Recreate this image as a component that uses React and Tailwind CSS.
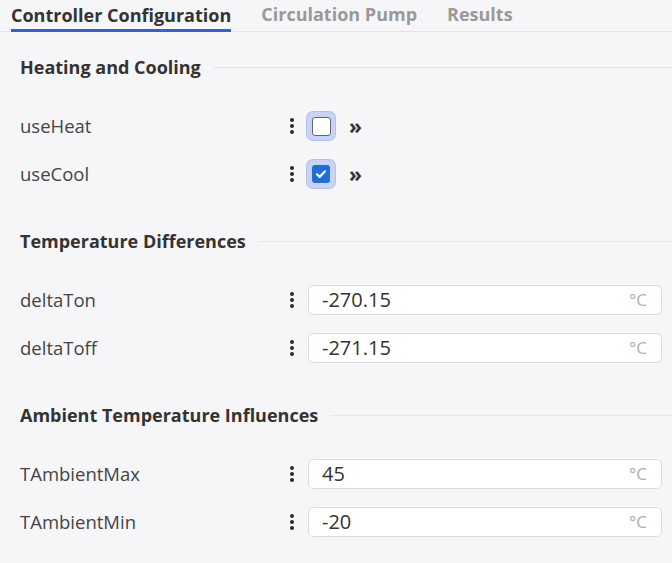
import React from "react";

const font = { fontFamily: "'Open Sans', 'Noto Sans', sans-serif" };

function Kebab() {
  return (
    <div className="flex w-[10px] flex-col items-center gap-[2px]">
      <span className="h-[4px] w-[4px] rounded-full bg-[#2a2a2a]" />
      <span className="h-[4px] w-[4px] rounded-full bg-[#2a2a2a]" />
      <span className="h-[4px] w-[4px] rounded-full bg-[#2a2a2a]" />
    </div>
  );
}

function Section({ title, first, children }) {
  return (
    <div className={first ? "mt-[23px]" : "mt-[40px]"}>
      <div className="flex h-[24px] items-center gap-[12px] pl-[20px]">
        <h3 className="text-[18px] font-bold leading-[24px] text-[#333] whitespace-nowrap">{title}</h3>
        <div className="h-px flex-1 bg-[#e6e7ea]" />
      </div>
      <div className="mt-[32px] flex flex-col gap-[18px]">{children}</div>
    </div>
  );
}

function CheckRow({ label, checked }) {
  return (
    <div className="flex h-[30px] items-center">
      <div className="w-[287px] pl-[20px] text-[18.5px] text-[#444]">{label}</div>
      <Kebab />
      <div className="ml-[10px] flex h-[28px] w-[28px] items-center justify-center rounded-[6px] bg-[#c9d3f3] ring-1 ring-[#b3c0ec]">
        {checked ? (
          <div className="flex h-[18px] w-[18px] items-center justify-center rounded-[3px] bg-[#1d6fd8]">
            <svg width="12" height="12" viewBox="0 0 12 12" fill="none">
              <path d="M2 6.3l2.6 2.6L10 3.3" stroke="#fff" strokeWidth="2.2" strokeLinecap="round" strokeLinejoin="round" />
            </svg>
          </div>
        ) : (
          <div className="h-[19px] w-[19px] rounded-[3px] border-[1.5px] border-[#666] bg-white" />
        )}
      </div>
      <span className="ml-[14px] text-[21px] font-bold leading-none text-[#333]">»</span>
    </div>
  );
}

function InputRow({ label, value }) {
  return (
    <div className="flex h-[30px] items-center">
      <div className="w-[287px] pl-[20px] text-[18.5px] text-[#444]">{label}</div>
      <Kebab />
      <div className="ml-[11px] mr-[10px] flex h-[30px] flex-1 items-center justify-between rounded-[5px] border border-[#dcdcdc] bg-white pl-[13px] pr-[14px]">
        <span className="text-[20px] text-[#333]">{value}</span>
        <span className="text-[17px] text-[#b0b0b0]">°C</span>
      </div>
    </div>
  );
}

export default function App() {
  return (
    <div className="min-h-[563px] w-full overflow-hidden bg-[#f6f6f8] pb-[20px]" style={font}>
      <div className="flex h-[32px] items-end gap-[30px] border-b border-[#e4e5e8] px-[11px]">
        <div className="-mb-px border-b-[3px] border-[#3b5fc8] pb-[1px] text-[18px] font-bold leading-[26px] text-[#333]">
          Controller Configuration
        </div>
        <div className="pb-[4px] text-[18px] font-bold leading-[26px] text-[#999]">Circulation Pump</div>
        <div className="pb-[4px] text-[18px] font-bold leading-[26px] text-[#999]">Results</div>
      </div>
      <Section title="Heating and Cooling" first>
        <CheckRow label="useHeat" />
        <CheckRow label="useCool" checked />
      </Section>
      <Section title="Temperature Differences">
        <InputRow label="deltaTon" value="-270.15" />
        <InputRow label="deltaToff" value="-271.15" />
      </Section>
      <Section title="Ambient Temperature Influences">
        <InputRow label="TAmbientMax" value="45" />
        <InputRow label="TAmbientMin" value="-20" />
      </Section>
    </div>
  );
}
